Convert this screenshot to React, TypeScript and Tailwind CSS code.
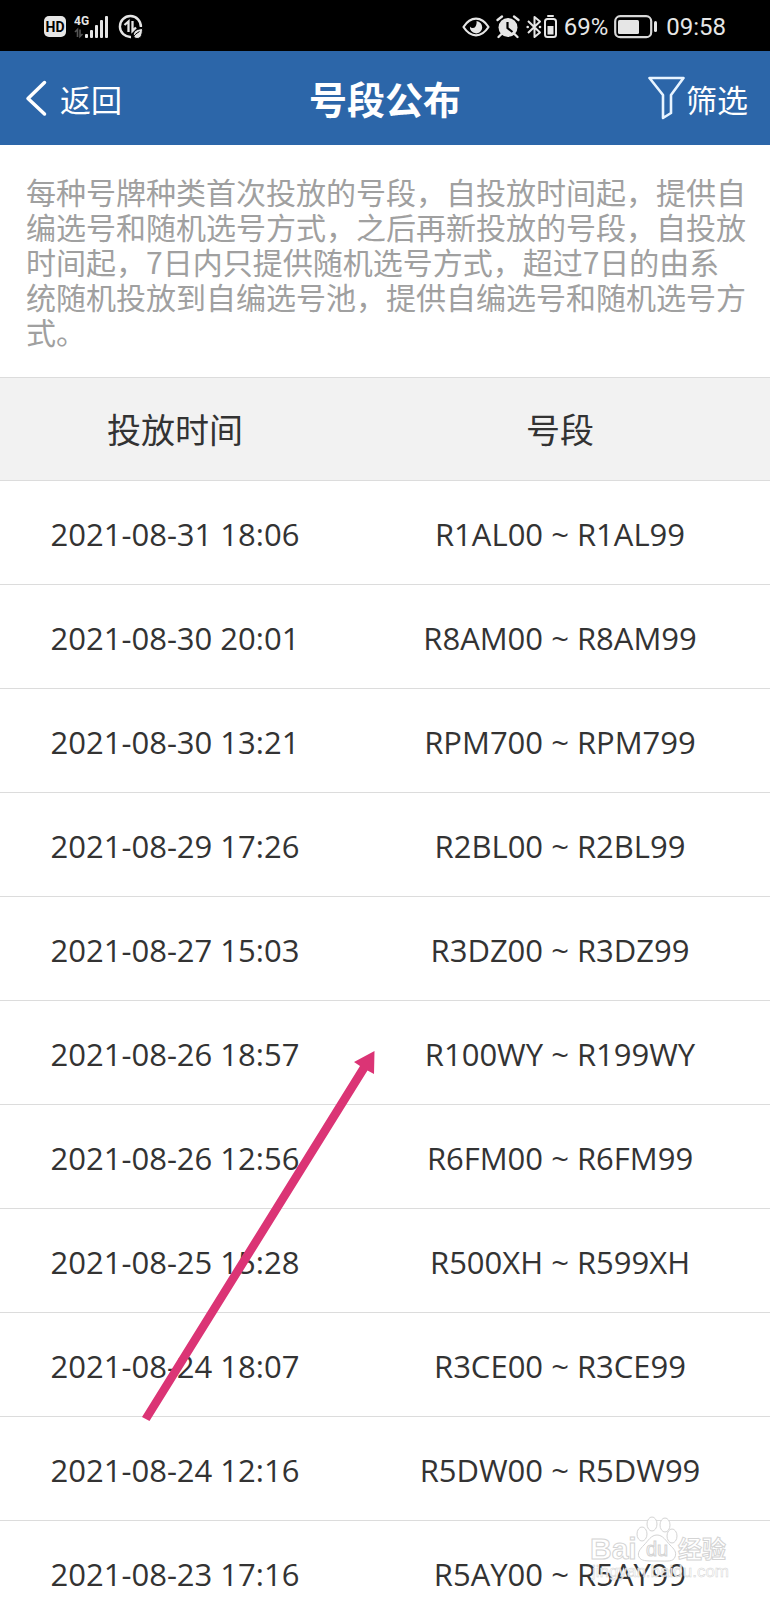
import type { ReactNode } from "react";

type Release = {
    time: string;
    from: string;
    to: string;
};

const releases: Release[] = [
    { time: "2021-08-31 18:06", from: "R1AL00", to: "R1AL99" },
    { time: "2021-08-30 20:01", from: "R8AM00", to: "R8AM99" },
    { time: "2021-08-30 13:21", from: "RPM700", to: "RPM799" },
    { time: "2021-08-29 17:26", from: "R2BL00", to: "R2BL99" },
    { time: "2021-08-27 15:03", from: "R3DZ00", to: "R3DZ99" },
    { time: "2021-08-26 18:57", from: "R100WY", to: "R199WY" },
    { time: "2021-08-26 12:56", from: "R6FM00", to: "R6FM99" },
    { time: "2021-08-25 15:28", from: "R500XH", to: "R599XH" },
    { time: "2021-08-24 18:07", from: "R3CE00", to: "R3CE99" },
    { time: "2021-08-24 12:16", from: "R5DW00", to: "R5DW99" },
    { time: "2021-08-23 17:16", from: "R5AY00", to: "R5AY99" },
];

function HdBadge() {
    return (
        <span className="flex h-[21px] w-[22px] items-center justify-center rounded-[5px] bg-[#e6e6e6] font-['Roboto',sans-serif] text-[14px] leading-none font-bold text-black">
            HD
        </span>
    );
}

function Signal() {
    return (
        <svg width="36" height="24" viewBox="0 0 36 24" aria-hidden="true">
            <text
                x="0"
                y="10"
                fontSize="12"
                fontWeight="700"
                fontFamily="Roboto, sans-serif"
                fill="#e6e6e6"
            >
                4G
            </text>
            <g stroke="#555" strokeWidth="1.6" fill="none">
                <path d="M1 17l2.5-2.5V22M6 14.500v7l2.500-2.500" />
            </g>
            <g fill="#e6e6e6">
                <rect x="11" y="19" width="3" height="4" rx="1" />
                <rect x="16" y="15" width="3" height="8" rx="1" />
                <rect x="21" y="10" width="3" height="13" rx="1" />
                <rect x="26" y="5" width="3" height="18" rx="1" />
                <rect x="31" y="1" width="3" height="22" rx="1" />
            </g>
        </svg>
    );
}

function DataSaver() {
    return (
        <svg width="26" height="26" viewBox="0 0 26 26" fill="none" aria-hidden="true">
            <path
                d="M13 23A10.500 10.500 0 1 1 22.900 13"
                stroke="#e6e6e6"
                strokeWidth="2.400"
            />
            <path
                d="M6.500 11L10.500 7.500V18M14.500 7v10L18 13.500"
                stroke="#e6e6e6"
                strokeWidth="2.300"
            />
            <path
                d="M24.500 14.500c-5 .5-9 2-9 6 0 2.500 1.500 4 3.500 4 4.500 0 5.500-5 5.500-10z"
                fill="#e6e6e6"
                stroke="#000"
                strokeWidth="1"
            />
            <path d="M14 24.500c2-3 4-5 7.500-7" stroke="#000" strokeWidth="1" />
        </svg>
    );
}

function Eye() {
    return (
        <svg width="28" height="20" viewBox="0 0 28 20" fill="none" aria-hidden="true">
            <path
                d="M1.500 10C5 4.500 9 1.700 14 1.700S23 4.500 26.500 10C23 15.500 19 18.300 14 18.300S5 15.500 1.500 10z"
                stroke="#e6e6e6"
                strokeWidth="2.200"
                strokeLinejoin="round"
            />
            <path
                d="M14.500 4a6.200 6.200 0 1 1-6.600 5.500 3.300 3.300 0 0 0 5.600 0c1-1.700 1.300-3.500 1-5.500z"
                fill="#e6e6e6"
            />
        </svg>
    );
}

function Alarm() {
    return (
        <svg width="24" height="24" viewBox="0 0 24 24" fill="none" aria-hidden="true">
            <circle cx="12" cy="12.500" r="9.500" fill="#e6e6e6" />
            <path
                d="M1.500 5L6 1.500M22.500 5L18 1.500M5.500 19l-3 3M18.500 19l3 3"
                stroke="#e6e6e6"
                strokeWidth="2.300"
                strokeLinecap="round"
            />
            <path d="M11.500 7v6l5 4" stroke="#000" strokeWidth="2.200" />
        </svg>
    );
}

function Bluetooth() {
    return (
        <svg width="32" height="24" viewBox="0 0 32 24" fill="none" aria-hidden="true">
            <g stroke="#e6e6e6" strokeWidth="2">
                <path
                    d="M2 6l12 11.500-5.500 4.500V2l5.500 4.500L2 18"
                    strokeLinejoin="round"
                />
                <rect x="19" y="4" width="11" height="18" rx="2.500" />
            </g>
            <g fill="#e6e6e6">
                <circle cx="1.700" cy="12" r="1.300" />
                <circle cx="14" cy="12" r="1.300" />
                <rect x="21" y="0" width="7" height="2" rx="1" />
                <rect x="21.500" y="11" width="6" height="8.500" />
            </g>
        </svg>
    );
}

function Battery() {
    return (
        <svg width="44" height="24" viewBox="0 0 44 24" fill="none" aria-hidden="true">
            <rect
                x="1.200"
                y="1.200"
                width="36"
                height="21"
                rx="5"
                stroke="#d8d8d8"
                strokeWidth="2.200"
            />
            <rect x="4" y="5" width="21" height="14" rx="1.500" fill="#e6e6e6" />
            <rect x="40" y="6" width="3" height="11" rx="1.500" fill="#e6e6e6" />
        </svg>
    );
}

function StatusBar() {
    return (
        <div className="flex h-[51px] shrink-0 items-center justify-between bg-black px-11 pt-[2px] font-['Roboto',sans-serif] text-[24px] leading-none text-[#e6e6e6]">
            <div className="flex items-center gap-2">
                <HdBadge />
                <Signal />
                <DataSaver />
            </div>
            <div className="flex items-center gap-[6px]">
                <Eye />
                <Alarm />
                <Bluetooth />
                <span>69%</span>
                <Battery />
                <span className="pl-[2px]">09:58</span>
            </div>
        </div>
    );
}

function NavBar() {
    return (
        <header className="grid h-[94px] shrink-0 grid-cols-3 items-center bg-[#2c66a9] px-[22px] text-white">
            <button
                type="button"
                className="flex items-center gap-3 justify-self-start text-[31px] leading-none"
            >
                <svg width="26" height="38" viewBox="0 0 26 38" fill="none" aria-hidden="true">
                    <path
                        d="M22.500 3.500L6 19.500 22.500 35"
                        stroke="#fff"
                        strokeWidth="3.500"
                        strokeLinecap="round"
                        strokeLinejoin="round"
                    />
                </svg>
                返回
            </button>
            <h1 className="justify-self-center text-[38px] leading-none font-bold whitespace-nowrap">
                号段公布
            </h1>
            <button
                type="button"
                className="flex items-center justify-self-end text-[31px] leading-none"
            >
                <svg width="38" height="46" viewBox="0 0 38 46" fill="none" aria-hidden="true">
                    <path
                        d="M1.500 3h34L23 20v18L15 43V20z"
                        stroke="#e8f4ff"
                        strokeWidth="2.600"
                        strokeLinejoin="round"
                    />
                </svg>
                筛选
            </button>
        </header>
    );
}

function HeadCell({ children }: { children: ReactNode }) {
    return (
        <th scope="col" className="h-[103px] p-0 text-[34px] leading-none font-normal">
            {children}
        </th>
    );
}

function ReleaseTable() {
    return (
        <table className="w-full table-fixed border-collapse text-center text-[#333]">
            <colgroup>
                <col className="w-5/11" />
                <col />
            </colgroup>
            <thead>
                <tr className="border-y border-[#dcdcdc] bg-[#f2f2f2]">
                    <HeadCell>投放时间</HeadCell>
                    <HeadCell>号段</HeadCell>
                </tr>
            </thead>
            <tbody className="font-['Open_Sans','Noto_Sans_CJK_SC',sans-serif] text-[31px] leading-none">
                {releases.map(({ time, from, to }) => (
                    <tr key={time} className="border-b border-[#dcdcdc]">
                        <td className="h-[104px] p-0 pt-1">{time}</td>
                        <td className="h-[104px] p-0 pt-1">
                            {from} ~ {to}
                        </td>
                    </tr>
                ))}
            </tbody>
        </table>
    );
}

function Arrow() {
    return (
        <svg
            className="pointer-events-none absolute top-[1050px] left-[141px]"
            width="236"
            height="372"
            viewBox="0 0 236 372"
            aria-hidden="true"
        >
            <path
                d="M1 367L219 16 213 12 233.500 1 233 24 226.500 20.500 8.500 371z"
                fill="#db3475"
            />
        </svg>
    );
}

function Watermark() {
    return (
        <svg
            className="pointer-events-none absolute right-[38px] bottom-[16px]"
            width="144"
            height="70"
            viewBox="0 0 144 70"
            fontFamily="'Liberation Sans', 'Noto Sans CJK SC', sans-serif"
            aria-hidden="true"
        >
            <g fill="#fff" fillOpacity="0.85" stroke="#d4d4d4" strokeWidth="1">
                <text x="2" y="45" fontSize="30" fontWeight="700">
                    Bai
                </text>
                <ellipse cx="54" cy="20" rx="5" ry="7" />
                <ellipse cx="64" cy="10" rx="5" ry="7" />
                <ellipse cx="77" cy="11" rx="5" ry="7" />
                <ellipse cx="84" cy="22" rx="5" ry="7" />
                <path d="M69 21c6 0 9 6 13 10s7 7 5 12-7 4-18 4-16 0-18-4 1-8 5-12 7-10 13-10z" />
                <text x="58" y="42" fontSize="20">
                    du
                </text>
                <text x="90" y="44" fontSize="24" fontWeight="700">
                    经验
                </text>
                <text x="4" y="63" fontSize="17" strokeWidth="0.500">
                    jingyan.baidu.com
                </text>
            </g>
        </svg>
    );
}

function App() {
    return (
        <div className="relative flex h-screen flex-col overflow-hidden bg-white font-['Noto_Sans_CJK_SC',sans-serif]">
            <StatusBar />
            <NavBar />
            <main className="min-h-0 flex-1 overflow-hidden">
                <p className="pt-[29px] pr-[23px] pb-[28px] pl-[26px] text-[30px] leading-[35px] text-[#a0a0a0]">
                    每种号牌种类首次投放的号段，自投放时间起，提供自编选号和随机选号方式，之后再新投放的号段，自投放时间起，7日内只提供随机选号方式，超过7日的由系统随机投放到自编选号池，提供自编选号和随机选号方式。
                </p>
                <ReleaseTable />
            </main>
            <Arrow />
            <Watermark />
        </div>
    );
}

export default App;
